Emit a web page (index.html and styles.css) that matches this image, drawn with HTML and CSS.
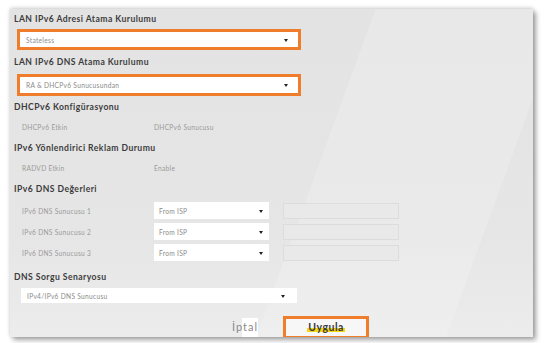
FILE: index.html
```html
<!DOCTYPE html>
<html lang="tr">
<head>
<meta charset="utf-8">
<link rel="stylesheet" href="styles.css">
</head>
<body>
<div class="panel">
  <div class="streak"></div>
  <div class="content">
    <h2 class="h h1">LAN IPv6 Adresi Atama Kurulumu</h2>
    <div class="sel sel-hl sel-wide"><span>Stateless</span><i class="arrow"></i></div>

    <h2 class="h h2">LAN IPv6 DNS Atama Kurulumu</h2>
    <div class="sel sel-hl sel-wide sel-2"><span>RA &amp; DHCPv6 Sunucusundan</span><i class="arrow"></i></div>

    <h2 class="h h3">DHCPv6 Konfigürasyonu</h2>
    <div class="row"><span class="lbl">DHCPv6 Etkin</span><span class="val">DHCPv6 Sunucusu</span></div>

    <h2 class="h h4">IPv6 Yönlendirici Reklam Durumu</h2>
    <div class="row"><span class="lbl">RADVD Etkin</span><span class="val">Enable</span></div>

    <h2 class="h h5">IPv6 DNS Değerleri</h2>
    <div class="dns">
      <div class="dnsrow"><span class="lbl">IPv6 DNS Sunucusu 1</span><div class="sel sel-sm"><span>From ISP</span><i class="arrow"></i></div><div class="dis"></div></div>
      <div class="dnsrow"><span class="lbl">IPv6 DNS Sunucusu 2</span><div class="sel sel-sm"><span>From ISP</span><i class="arrow"></i></div><div class="dis"></div></div>
      <div class="dnsrow"><span class="lbl">IPv6 DNS Sunucusu 3</span><div class="sel sel-sm"><span>From ISP</span><i class="arrow"></i></div><div class="dis"></div></div>
    </div>

    <h2 class="h h6">DNS Sorgu Senaryosu</h2>
    <div class="sel sel-last"><span>IPv4/IPv6 DNS Sunucusu</span><i class="arrow"></i></div>

    <div class="buttons">
      <span class="cancel">İptal</span>
      <span class="apply"><mark>Uygula</mark></span>
    </div>
  </div>
</div>
</body>
</html>
```
FILE: styles.css
```css
html, body {
  margin: 0;
  padding: 0;
  background: #ffffff;
  width: 544px;
  height: 343px;
  overflow: hidden;
  font-family: "Lato", "Open Sans", sans-serif;
}
.panel {
  position: relative;
  margin: 9px 0 0 10px;
  width: 523px;
  height: 328px;
  background: linear-gradient(180deg, #e3e3e3 0%, #e6e6e6 70%, #ececec 100%);
  box-shadow: 0 -1px 4px rgba(0,0,0,0.18), 3px 3px 5px rgba(0,0,0,0.35);
  overflow: hidden;
}
.streak {
  position: absolute;
  left: 300px;
  top: -20px;
  width: 190px;
  height: 400px;
  background: rgba(255,255,255,0.18);
  transform: skewX(-20deg);
}
.content {
  position: relative;
  padding: 4px 0 0 4px;
}
.h {
  margin: 0;
  font-size: 8.6px;
  font-weight: 700;
  color: #3c3c3c;
  line-height: 12px;
  height: 12px;
  letter-spacing: 0.45px;
}
.sel {
  position: relative;
  display: flex;
  align-items: center;
  background: #ffffff;
  color: #8a8a8a;
  font-size: 6.6px;
  letter-spacing: 0.3px;
  box-sizing: border-box;
}
.sel span { padding-left: 6px; }
.arrow {
  position: absolute;
  right: 10px;
  top: 50%;
  margin-top: -1px;
  width: 0;
  height: 0;
  border-left: 2.5px solid transparent;
  border-right: 2.5px solid transparent;
  border-top: 3px solid #222;
}
.sel-hl {
  border: 3px solid #ef7d2c;
}
.sel-wide {
  margin: 4px 0 0 3px;
  width: 284px;
  height: 21px;
}
.sel-wide span { padding-left: 6px; }
.sel-2 { height: 22px; margin-top: 6px; }
.h1 { margin-top: 0; }
.h2 { margin-top: 6px; }
.h3 { margin-top: 5px; }
.h4 { margin-top: 9px; }
.h5 { margin-top: 9px; }
.h6 { margin-top: 10px; }
.row {
  display: flex;
  height: 12px;
  line-height: 12px;
  margin-top: 8px;
  font-size: 6.6px;
  letter-spacing: 0.3px;
  color: #9a9a9a;
}
.lbl {
  width: 140px;
  padding-left: 8px;
  box-sizing: border-box;
  font-size: 6.6px;
  letter-spacing: 0.3px;
  color: #9a9a9a;
}
.val { color: #9a9a9a; }
.dns {
  display: flex;
  flex-direction: column;
  gap: 4px;
  margin-top: 7px;
}
.dnsrow {
  display: flex;
  align-items: center;
  height: 17px;
}
.sel-sm {
  width: 115px;
  height: 17px;
}
.sel-sm span { padding-left: 5px; }
.sel-sm .arrow { right: 6px; }
.dis {
  margin-left: 14px;
  width: 116px;
  height: 16px;
  background: #e9e9e9;
  border: 1px solid #dcdcdc;
  box-sizing: border-box;
}
.sel-last {
  margin: 5px 0 0 7px;
  width: 276px;
  height: 15px;
}
.sel-last .arrow { right: 12px; }
.buttons {
  display: flex;
  align-items: center;
  margin-top: 13px;
  margin-left: 218px;
  height: 22px;
}
.cancel {
  font-size: 11px;
  color: #8a8a8a;
  letter-spacing: 1px;
  background: linear-gradient(90deg, transparent 40%, #ffffff 40%);
  padding: 2px 0 3px 0;
  line-height: 14px;
}
.apply {
  margin-left: 25px;
  width: 86px;
  height: 23px;
  box-sizing: border-box;
  border: 3px solid #ef7d2c;
  background: #f7f7f7;
  display: flex;
  align-items: center;
  justify-content: center;
}
.apply mark {
  background: linear-gradient(180deg, transparent 55%, #f4d616 55%, #f4d616 90%, transparent 90%);
  color: #3a3a3a;
  font-weight: 700;
  font-size: 10.5px;
  letter-spacing: 0.5px;
  padding: 0 1px;
}
```
